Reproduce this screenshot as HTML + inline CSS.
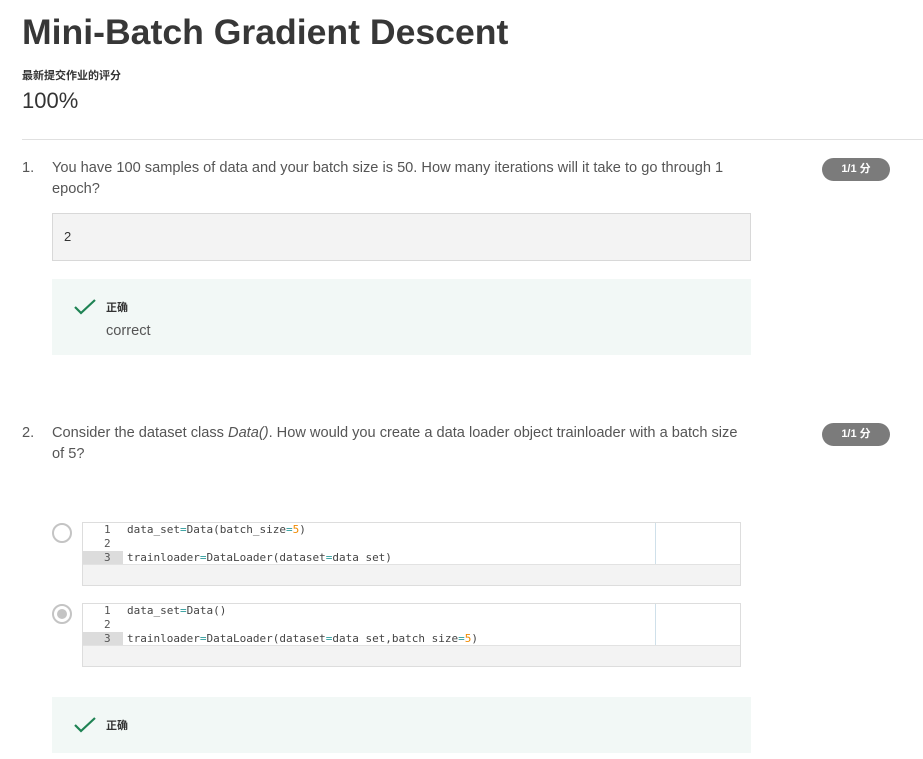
<!DOCTYPE html>
<html><head><meta charset="utf-8"><style>
body{margin:0;width:923px;height:759px;background:#fff;position:relative;overflow:hidden;font-family:"Liberation Sans","Noto Sans CJK SC",sans-serif;color:#333}
.a{position:absolute;white-space:nowrap}
.q{font-size:14.6px;color:#555;line-height:21px}
.badge{position:absolute;left:822px;width:68px;height:23px;border-radius:12px;background:#7b7b7b;color:#fff;font-size:11px;font-weight:bold;text-align:center;line-height:23px}
.ok{position:absolute;left:52px;width:699px;background:#f2f8f6}
.code{position:absolute;left:82px;width:657px;height:62px;border:1px solid #ddd;background:#f3f3f3}
.code .in{position:absolute;left:0;top:0;width:657px;height:41px;background:#fff;border-bottom:1px solid #e2e2e2}
.code .hl{position:absolute;left:0;top:28px;width:40px;height:13px;background:#dcdcdc}
.code .vl{position:absolute;left:572px;top:0;width:1px;height:41px;background:#cfe0ea}
.code pre{position:absolute;margin:0;font-family:"DejaVu Sans Mono","Liberation Mono",monospace;font-size:11px;line-height:14px;color:#444;top:0}
.n{color:#2a9a9a}.o{color:#f08a00}
.radio{position:absolute;left:52px;width:16px;height:16px;border:2px solid #c4c4c4;border-radius:50%;background:#fff}
</style></head><body>
<div class="a" style="left:22px;top:12px;font-size:35.6px;font-weight:bold;color:#373737">Mini-Batch Gradient Descent</div>
<div class="a" style="left:22px;top:67px;font-size:11px;font-weight:bold;color:#333">最新提交作业的评分</div>
<div class="a" style="left:22px;top:88px;font-size:22px;color:#333">100%</div>
<div class="a" style="left:22px;top:139px;width:901px;height:1px;background:#e0e0e0"></div>

<div class="a q" style="left:22px;top:158px">1.</div>
<div class="a q" style="left:52px;top:158px">You have 100 samples of data and your batch size is 50. How many iterations will it take to go through 1<br>epoch?</div>
<div class="badge" style="top:158px">1/1 分</div>
<div class="a" style="left:52px;top:213px;width:697px;height:46px;background:#f3f3f3;border:1px solid #d8d8d8"></div>
<div class="a" style="left:64px;top:229px;font-size:13px;color:#333">2</div>
<div class="ok" style="top:279px;height:76px"></div>
<svg class="a" style="left:73px;top:298px" width="24" height="18"><path d="M2 9 L8 15 L22 2" stroke="#1f8354" stroke-width="2.2" fill="none"/></svg>
<div class="a" style="left:106px;top:299px;font-size:11px;font-weight:bold;color:#333">正确</div>
<div class="a" style="left:106px;top:323px;font-size:14.6px;color:#555">correct</div>

<div class="a q" style="left:22px;top:423px">2.</div>
<div class="a q" style="left:52px;top:423px">Consider the dataset class <i>Data()</i>. How would you create a data loader object trainloader with a batch size<br>of 5?</div>
<div class="badge" style="top:423px">1/1 分</div>

<div class="radio" style="top:523px"></div>
<div class="code" style="top:522px"><div class="in"></div><div class="hl"></div><div class="vl"></div>
<pre style="left:21px;color:#555">1
2
3</pre>
<pre style="left:44px">data_set<span class="n">=</span>Data(batch_size<span class="n">=</span><span class="o">5</span>)

trainloader<span class="n">=</span>DataLoader(dataset<span class="n">=</span>data set)</pre></div>

<div class="radio" style="top:604px"><div style="position:absolute;left:3px;top:3px;width:10px;height:10px;border-radius:50%;background:#c4c4c4"></div></div>
<div class="code" style="top:603px"><div class="in"></div><div class="hl"></div><div class="vl"></div>
<pre style="left:21px;color:#555">1
2
3</pre>
<pre style="left:44px">data_set<span class="n">=</span>Data()

trainloader<span class="n">=</span>DataLoader(dataset<span class="n">=</span>data set,batch size<span class="n">=</span><span class="o">5</span>)</pre></div>

<div class="ok" style="top:697px;height:56px"></div>
<svg class="a" style="left:73px;top:716px" width="24" height="18"><path d="M2 9 L8 15 L22 2" stroke="#1f8354" stroke-width="2.2" fill="none"/></svg>
<div class="a" style="left:106px;top:717px;font-size:11px;font-weight:bold;color:#333">正确</div>
</body></html>
